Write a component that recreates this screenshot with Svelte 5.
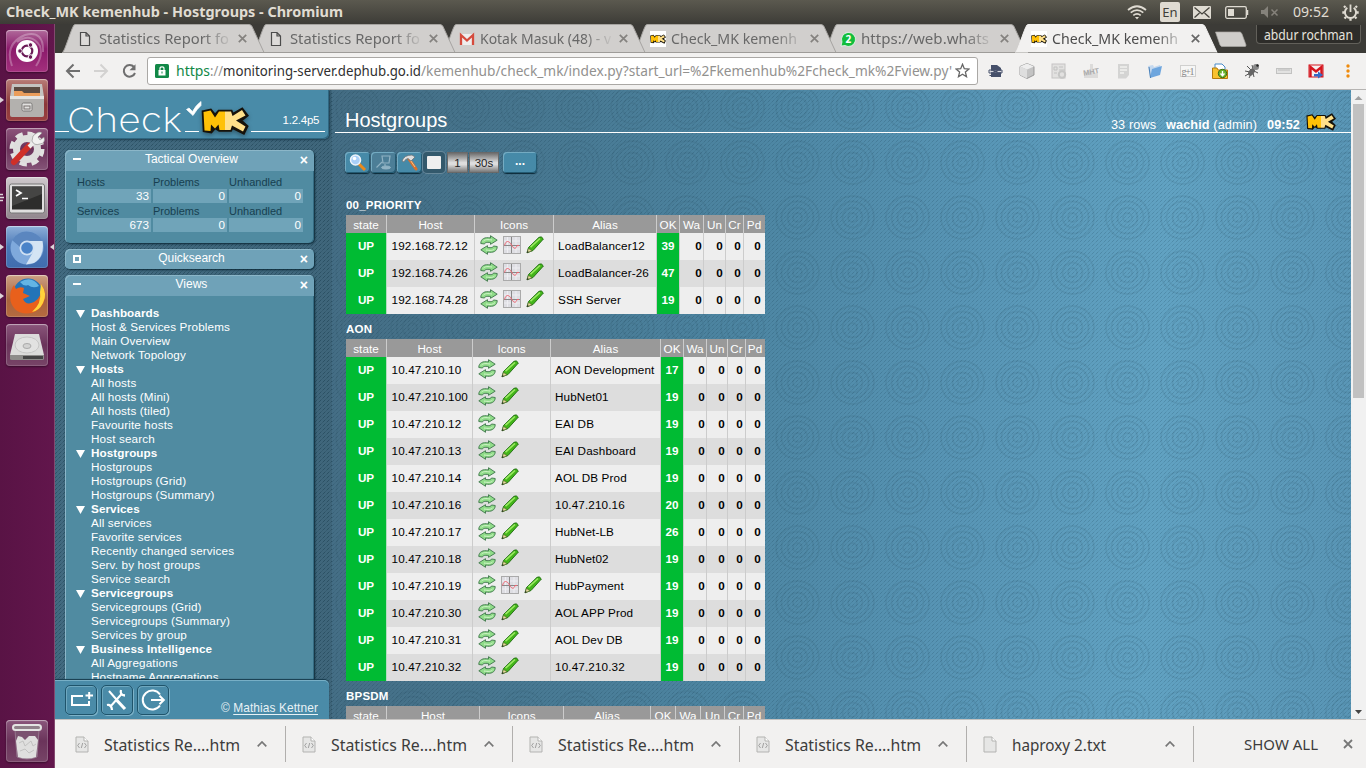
<script>
  const tabs = [
    { icon: 'doc', text: 'Statistics Report fo', w: 130 },
    { icon: 'doc', text: 'Statistics Report fo', w: 130 },
    { icon: 'gmail', text: 'Kotak Masuk (48) - v', w: 131 },
    { icon: 'mk', text: 'Check_MK kemenh', w: 126 },
    { icon: 'wa', text: 'https://web.whats', w: 128 },
    { icon: 'mk', text: 'Check_MK kemenh', w: 126, active: true }
  ];

  const views = [
    ['Dashboards', ['Host & Services Problems', 'Main Overview', 'Network Topology']],
    ['Hosts', ['All hosts', 'All hosts (Mini)', 'All hosts (tiled)', 'Favourite hosts', 'Host search']],
    ['Hostgroups', ['Hostgroups', 'Hostgroups (Grid)', 'Hostgroups (Summary)']],
    ['Services', ['All services', 'Favorite services', 'Recently changed services', 'Serv. by host groups', 'Service search']],
    ['Servicegroups', ['Servicegroups (Grid)', 'Servicegroups (Summary)', 'Services by group']],
    ['Business Intelligence', ['All Aggregations', 'Hostname Aggregations']]
  ];

  const heads = ['state', 'Host', 'Icons', 'Alias', 'OK', 'Wa', 'Un', 'Cr', 'Pd'];
  const groups = [
    {
      name: '00_PRIORITY',
      cols: [41, 88, 79, 103, 23, 24, 22, 18, 21],
      rows: [
        ['192.168.72.12', 'LoadBalancer12', 39, true],
        ['192.168.74.26', 'LoadBalancer-26', 47, true],
        ['192.168.74.28', 'SSH Server', 19, true]
      ]
    },
    {
      name: 'AON',
      cols: [41, 86, 78, 110, 23, 23, 21, 18, 19],
      rows: [
        ['10.47.210.10', 'AON Development', 17],
        ['10.47.210.100', 'HubNet01', 19],
        ['10.47.210.12', 'EAI DB', 19],
        ['10.47.210.13', 'EAI Dashboard', 19],
        ['10.47.210.14', 'AOL DB Prod', 19],
        ['10.47.210.16', '10.47.210.16', 20],
        ['10.47.210.17', 'HubNet-LB', 26],
        ['10.47.210.18', 'HubNet02', 19],
        ['10.47.210.19', 'HubPayment', 19, true],
        ['10.47.210.30', 'AOL APP Prod', 19],
        ['10.47.210.31', 'AOL Dev DB', 19],
        ['10.47.210.32', '10.47.210.32', 19]
      ]
    },
    { name: 'BPSDM', cols: [41, 93, 84, 87, 25, 25, 24, 19, 21], rows: [] }
  ];

  const tactical = [
    ['Hosts', 33],
    ['Services', 673]
  ];
  const downloads = ['Statistics Re….htm', 'Statistics Re….htm', 'Statistics Re….htm', 'Statistics Re….htm'];
</script>

{#snippet fit(text, w, size, color, weight = 400, family = 'Noto Sans')}
  <svg class="fit" width={w} height="22" style:color={color}>
    <text x="0" y="16" textLength={w} lengthAdjust="spacingAndGlyphs" font-size={size} font-weight={weight} font-family="{family}, sans-serif" fill="currentColor">{text}</text>
  </svg>
{/snippet}

{#snippet mk(w, h)}
  <svg class="blk" width={w} height={h} viewBox="0 0 48 28">
    <path d="M2.500 5 9.500 3.500 14 9 18 4.500H30L31.500 8 41 2.500 45.500 8.500 39 13.500 45.500 19.500 42.500 25.500 31 20 29.500 23H18.500L14 20 10 24.500 3.500 23.500Z" fill="#16120a" stroke="#16120a" stroke-width="3.600" stroke-linejoin="miter" />
    <path d="M2.500 5 9.500 3.500 14 10.500 18 4.500H24V23H18.500L17.500 17.500 14 21.500 10 17.500 9.500 24 3.500 23.500Z" fill="#ffc107" />
    <path d="M24 4.500H30L31.500 9 41 3 44.500 8.500 35 13.500 44.500 19.500 42 24.500 31 18.500 29.500 23H24Z" fill="#ffe08a" />
  </svg>
{/snippet}

{#snippet page(code)}
  <svg class="blk" width="14" height="17" viewBox="0 0 14 17">
    <path d="M1 1H9L13 5V16H1Z" fill="#e6e6e5" stroke="#b3b3b1" /><path d="M9 1V5H13" fill="#fff" stroke="#b3b3b1" />
    {#if code}<path d="M4.500 7 2.700 9.500 4.500 12M9.500 7 11.300 9.500 9.500 12M7.700 7 6.300 12" fill="none" stroke="#999" stroke-width=".9" />{/if}
  </svg>
{/snippet}

{#snippet arrows()}
  <svg class="blk" width="18" height="20" viewBox="0 0 18 20">
    <path d="M.8 8.500C.8 3.500 5 2 10.500 3V.7L17.200 5.200 10.500 9.300V7.500C6.500 7 4.800 7.500 4.500 9Z" fill="#8fdc88" stroke="#4a8055" stroke-width="1" />
    <path d="M17.200 11.500C17.200 16.500 13 18 7.500 17V19.300L.8 14.800 7.500 10.700V12.500C11.500 13 13.200 12.500 13.500 11Z" fill="#8fdc88" stroke="#4a8055" stroke-width="1" />
    <path d="M3 6.500C5 4 8 4.500 12 5M15 13.500C13 16 10 15.500 6 15" fill="none" stroke="#d3f5cb" stroke-width="1" />
  </svg>
{/snippet}

{#snippet graph()}
  <svg class="blk" width="18" height="20" viewBox="0 0 18 20">
    <rect x=".5" y="1.500" width="17" height="17" fill="#dedee3" stroke="#aaa" />
    <path d="M1 6H17M1 14H17M4.500 2V18M13 2V18" stroke="#eeeef2" />
    <path d="M1 10.500H17M8.500 2V18" stroke="#888" stroke-width="1" />
    <path d="M1.500 10.500C3 5 6 5.500 8.500 10 11 14.500 13 14 14 10.500H16" fill="none" stroke="#ee6470" stroke-width="1" />
  </svg>
{/snippet}

{#snippet pencil()}
  <svg class="blk" width="18" height="20" viewBox="0 0 18 20">
    <path d="M1 17.800 2.500 12.500 13 2.300Q15.500 .8 17.400 4L7 15.500Z" fill="#43b51a" stroke="#1d6a10" stroke-width=".9" />
    <path d="M4.500 12.200 14 3.500" stroke="#9bea62" stroke-width="1.600" />
    <path d="M1 17.800 2.500 13.500 6 15.700Z" fill="#e9d9a3" stroke="#54682a" stroke-width=".6" /><path d="M.8 18 1.500 16 2.800 17Z" fill="#222" />
  </svg>
{/snippet}

<div class="desktop">
  <header class="topbar">
    <div class="wtitle">{@render fit('Check_MK kemenhub - Hostgroups - Chromium', 337, 15, '#e0dcd2', 700)}</div>
    <svg class="wifi" width="20" height="15" viewBox="0 0 20 15" fill="none" stroke="#dfdbd2" stroke-width="1.700"><path d="M1 5Q10-2.500 19 5M3.700 7.700Q10 2.500 16.300 7.700M6.300 10.300Q10 7.300 13.700 10.300" /><path d="M8 12 10 14.500 12 12Z" fill="#dfdbd2" stroke="none" /></svg>
    <span class="lang">En</span>
    <svg class="mail" width="18" height="13"><rect width="18" height="13" rx="1" fill="#dfdbd2" /><path d="M1.500 1.500 9 8 16.500 1.500M1.500 11.500 6.500 7M16.500 11.500 11.500 7" fill="none" stroke="#45433d" stroke-width="1.300" /></svg>
    <svg class="bat" width="24" height="13"><rect x=".7" y=".7" width="20.600" height="11.600" rx="1.500" fill="none" stroke="#dfdbd2" stroke-width="1.300" /><rect x="3" y="3" width="6" height="7" fill="#dfdbd2" /><path d="M22.500 4V9" stroke="#dfdbd2" stroke-width="1.500" /></svg>
    <svg class="snd" width="18" height="12" fill="none" stroke="#85827b"><path d="M0 4H3L7 0V12L3 8H0Z" fill="#85827b" stroke="none" /><path d="M10.500 3.500 16.500 9.500M16.500 3.500 10.500 9.500" stroke-width="1.500" /></svg>
    <div class="clock">{@render fit('09:52', 36, 15, '#e0dcd2')}</div>
    <svg width="17" height="17" viewBox="0 0 17 17" fill="none" stroke="#dfdbd2"><path d="M5.300 3.800A5.600 5.600 0 1 0 11.700 3.800" stroke-width="2" /><path d="M8.500.5V8" stroke-width="1.800" /><path d="M3.500 3.500 2 2M13.500 3.500 15 2M2.500 8.500H.3M14.500 8.500H16.700M4 13 2.500 14.500M13 13 14.500 14.500M8.500 14.500V16.800" stroke-width="2.300" /></svg>
  </header>

  <aside class="launcher">
    <div class="tile" style:background="linear-gradient(#b06a9b,#8b1a6b 45%,#a3307d)">
      <svg width="42" height="42"><path d="M6 36Q-2 14 19 5 38 0 37 22M11 12Q25 2 34 16 37 26 30 36" fill="none" stroke="#fff" stroke-opacity=".28" stroke-width="2" /><circle cx="21" cy="21" r="11" fill="#fff" /><circle cx="21" cy="21" r="5.300" fill="none" stroke="#6a1b56" stroke-width="2.200" /><g fill="#6a1b56" stroke="#fff" stroke-width="1"><circle cx="14" cy="21" r="2.300" /><circle cx="24.500" cy="15" r="2.300" /><circle cx="24.500" cy="27" r="2.300" /></g></svg>
    </div>
    <div class="tile" style:background="linear-gradient(#b87d77,#8b3739 60%,#9b4040)">
      <svg width="42" height="42"><path d="M6 5H36L38 18H4Z" fill="#c4c3c0" /><path d="M8 8H34V18H8Z" fill="#5a4a41" /><path d="M8 12H16L18 14H34V20H8Z" fill="#eb9d5b" /><path d="M4 17H38V36Q38 38 36 38H6Q4 38 4 36Z" fill="#b3b1ae" /><path d="M4 17H38V20H4Z" fill="#e4e3e1" /><rect x="16" y="24" width="10" height="8" rx="1.500" fill="#e2e1df" stroke="#7b7977" /><rect x="18" y="27" width="6" height="3" fill="none" stroke="#77716e" /></svg>
      <i class="pip"></i>
    </div>
    <div class="tile" style:background="linear-gradient(#8d547c,#6a3159 50%,#855478)">
      <svg width="42" height="42"><circle cx="21" cy="21" r="15" fill="none" stroke="#e2e2e1" stroke-width="5" stroke-dasharray="7.100 4.680" /><circle cx="21" cy="21" r="10.500" fill="none" stroke="#dededd" stroke-width="7" /><path d="M8 34 23 18" stroke="#cf2f28" stroke-width="6" stroke-linecap="round" /><path d="M23 19 29 13" stroke="#ececeb" stroke-width="4" /><path d="M27 8Q33 2 36 5L32 9 34 12 38 9Q40 15 34 16 28 18 26 13Z" fill="#f2f2f1" stroke="#888" stroke-width=".6" /></svg>
    </div>
    <div class="tile" style:background="linear-gradient(#cfc9cd,#91868d)">
      <svg width="42" height="42"><rect x="3.500" y="7" width="35" height="29" rx="2" fill="#e0dfdf" stroke="#777" /><rect x="6" y="9.500" width="30" height="23" fill="#2d2d2c" /><path d="M6 9.500H36V17L6 29Z" fill="#454544" /><path d="M10 13 15 16 10 19M16 21.500H22" fill="none" stroke="#fff" stroke-width="1.700" /></svg>
      <svg class="stack" width="4" height="10"><path d="M0 1.500H3M0 4.500H4M0 7.500H3" stroke="#ddd5da" stroke-width="1.500" /></svg>
    </div>
    <div class="tile" style:background="linear-gradient(#8eb0d9,#4a77b6 50%,#406dae)">
      <svg width="42" height="42"><circle cx="21" cy="22" r="16.500" fill="#7fa9dc" /><path d="M21 15H36.500Q39 30 28 37L20 38.500 27 26Z" fill="#d4e4f4" /><path d="M6 14Q12 5 21 5.500 32 6 36.500 15H21Q15 15 14 21Z" fill="#5b86bf" /><circle cx="21" cy="22" r="7.500" fill="#cfe0f3" /><circle cx="21" cy="22" r="5.800" fill="#4a83c8" /></svg>
      <i class="pip"></i><i class="pip right"></i>
    </div>
    <div class="tile" style:background="linear-gradient(#cda083,#a8633d 60%,#b56b40)">
      <svg width="42" height="42"><circle cx="22" cy="18" r="14.500" fill="#2374b8" /><path d="M14 7Q26 0 33 11 27 14 22 10 18 12 14 7Z" fill="#63b5e4" /><path d="M35 9Q42 18 37 29 31 39 20 38.500 8 38 4.500 26 3 16 8 10L10 14Q14 11 18 13L17 18 24 21 17 24Q20 31 28 27 37 22 35 9Z" fill="#e8601c" /><path d="M35 9Q42 19 37 28 33 36 26 37 36 28 34 17Z" fill="#ffd33b" /></svg>
      <i class="pip"></i>
    </div>
    <div class="tile" style:background="linear-gradient(#8a567b,#6b345b 50%,#774467)">
      <svg width="42" height="42"><path d="M9 10H33L38 31H4Z" fill="#dcdcdb" /><path d="M4 31H38V35Q38 36 36 36H6Q4 36 4 35Z" fill="#8d8c8a" /><path d="M17 32H37V35H17Z" fill="#444" /><ellipse cx="21" cy="21" rx="12" ry="8" fill="#e2e2e1" stroke="#c6c6c5" /><ellipse cx="21" cy="22" rx="4" ry="2.500" fill="#d2d2d1" stroke="#aaa" /></svg>
    </div>
    <div class="tile trash" style:background="linear-gradient(#8a567b,#6b345b 50%,#774467)">
      <svg width="42" height="42"><path d="M9 10H33L31 37Q21 41 11 37Z" fill="#7b5270" stroke="#9c8295" stroke-width=".8" /><path d="M10 21 12 16 16 17 19 20 23 16 29 16 32 20 30 37Q21 40 12 37Z" fill="#dfdfde" /><path d="M13 23 17 21 19 26 25 21 27 26 30 24M14 31 19 29 23 33 28 30" stroke="#c2c2c1" fill="none" /><rect x="7" y="5" width="28" height="5" rx="2.500" fill="#8f8089" stroke="#e4e4e3" stroke-width="2" /></svg>
    </div>
  </aside>

  <main class="browser">
    <nav class="tabs">
      {#each tabs as t, i}
        <div class="tab" class:active={t.active} style:z-index={t.active ? 20 : 10 - i}>
          <svg class="shape" width="204" height="29"><path d="M.5 28.500C3 27 9 5 12 1Q12.500.5 14 .5H187Q189 .5 190 2.500L202 28.500" fill={t.active ? '#f2f1f0' : '#d1cfcd'} stroke={t.active ? '#f2f1f0' : '#a5a3a0'} stroke-width="1" />{#if !t.active}<path d="M0 28.500H204" stroke="#9e9c99" />{/if}</svg>
          <span class="fav">
            {#if t.icon === 'doc'}<svg width="16" height="16"><path d="M2.500 1.500H8L11.500 5V14.500H2.500ZM8 1.500V5H11.500" fill="#dddbd9" stroke="#4c4c4c" stroke-width="1.200" /></svg>
            {:else if t.icon === 'gmail'}<svg width="16" height="16"><rect x="1" y="3" width="14" height="11" fill="#efeded" /><path d="M2 14V4L8 9.500 14 4V14" fill="none" stroke="#d54b3d" stroke-width="2.300" /></svg>
            {:else if t.icon === 'wa'}<svg width="16" height="16"><path d="M1 15 2 11A7 7 0 1 1 5 14.500Z" fill="#12bd3c" stroke="#fff" stroke-width=".7" /><text x="8.300" y="11.500" text-anchor="middle" font-family="Noto Sans" font-size="10" font-weight="700" fill="#fff">2</text></svg>
            {:else}<span class="white">{@render mk(16, 10)}</span>{/if}
          </span>
          <span class="tlabel">{@render fit(t.text, t.w, 15, t.active ? '#4c4c4c' : '#686868')}</span>
          <svg class="x" width="9" height="9"><path d="M.8.8 8.200 8.200M8.200.8.8 8.200" stroke={t.active ? '#686868' : '#84827f'} stroke-width="1.700" /></svg>
        </div>
      {/each}
      <svg class="newtab" width="34" height="17"><path d="M1.500 1H26Q27 1 28 3L32 14Q32 15.500 31 15.500H8Q7 15.500 6 14Z" fill="#cfcdca" stroke="#a9a7a4" stroke-width=".7" /></svg>
      <div class="user">{@render fit('abdur rochman', 89, 13.5, '#e6e3dc')}</div>
    </nav>

    <div class="toolbar">
      <svg class="navs" width="92" height="20" fill="none" stroke-width="2"><g stroke="#6f6f6f"><path d="M26 10H13M19.500 3.500 13 10 19.500 16.500" transform="translate(-1 0)" /></g><g stroke="#d3d2d1"><path d="M39 10H52M45.500 3.500 52 10 45.500 16.500" /></g><path d="M79 6A5.800 5.800 0 1 0 80 12" stroke="#6f6f6f" /><path d="M80.500 3.200V9.200H74.500Z" fill="#6f6f6f" /></svg>
      <div class="url">
        <svg width="14" height="14"><rect width="14" height="14" rx="1.500" fill="#118847" /><rect x="3.500" y="6" width="7" height="5.500" fill="#fff" /><path d="M5 6V4.500Q5 2.800 7 2.800T9 4.500V6" fill="none" stroke="#fff" stroke-width="1.200" /><rect x="6.500" y="7.500" width="1" height="2" fill="#118847" /></svg>
        <div class="urltext">
          {@render fit('https', 34, 15.2, '#118847')}{@render fit('://', 13, 15.2, '#92918f')}{@render fit('monitoring-server.dephub.go.id', 198, 15.2, '#303030')}{@render fit("/kemenhub/check_mk/index.py?start_url=%2Fkemenhub%2Fcheck_mk%2Fview.py'", 531, 15.2, '#92918f')}
        </div>
        <svg width="15" height="15" viewBox="0 0 15 15"><path d="M7.500 1.300 9.300 5.700 14 6 10.400 9.100 11.500 13.700 7.500 11.200 3.500 13.700 4.600 9.100 1 6 5.700 5.700Z" fill="none" stroke="#666" stroke-width="1.300" /></svg>
      </div>
      <div class="exts">
        <svg width="16" height="16"><path d="M4 2H10L14 5V14H4Z" fill="#46506a" /><path d="M3 8.500H15" stroke="#d9dae0" stroke-width="1.400" /><path d="M2 7H7V10H2ZM10 7H15V10H10ZM7 8.500H10M2.500 12.500H13" stroke="#46506a" fill="none" /></svg>
        <svg width="16" height="16"><path d="M8 .5 15 3.500V12L8 15.500 1 12V3.500Z" fill="#c3c3c3" stroke="#888" stroke-width=".8" /><path d="M1 3.500 8 6.500 15 3.500 8 .5Z" fill="#eee" /><path d="M8 6.500V15.500L1 12V3.500Z" fill="#dedede" /></svg>
        <svg width="16" height="16"><rect x="1" y="1" width="13" height="14" fill="#e2e1e0" stroke="#c5c4c3" /><path d="M3 4H6V7H3ZM8 4H12M8 7H14M3 10H6" stroke="#c2c2c1" fill="none" /><circle cx="11" cy="11.500" r="3.200" fill="none" stroke="#c6c6c5" stroke-width="2" /></svg>
        <svg width="16" height="16"><path d="M1 10Q8 6 15 11V15H1ZM7 1H10V9H7Z" fill="#dcdbda" /><text x="0" y="11.500" font-size="7.500" font-weight="700" font-family="Liberation Sans" fill="#aaa" transform="rotate(-10 8 8)" textLength="16">MHT</text></svg>
        <svg width="16" height="16"><path d="M3 1H14V12L11 15.500H3Z" fill="#d4d4d3" /><path d="M5 4H12M5 7H12M5 10H9" stroke="#f1f1f0" stroke-width="1.300" /></svg>
        <svg width="16" height="16"><path d="M1 3 6 2 7 4 13 2 14 5 3 14Z" fill="#c4d8ee" /><path d="M3 15 5 6 15 3 13 12Z" fill="#6ea6de" /><path d="M2 4 3.500 15" stroke="#477fb8" /></svg>
        <svg width="16" height="16"><rect x=".5" y="2.500" width="15" height="11" fill="#f6f6f5" stroke="#d0d0cf" /><text x="1.500" y="11.500" font-size="10" font-family="Liberation Serif" fill="#888" textLength="13">g+1</text></svg>
        <svg width="16" height="16"><path d="M3 1H10L13 4V8H3Z" fill="#fff" stroke="#478ac9" /><path d="M.5 5H5L6 7H15.500V15.500H.5Z" fill="#f9c22e" stroke="#b57b0c" /><circle cx="10.500" cy="10.500" r="4.200" fill="#6bb32c" stroke="#376e18" /><path d="M10.500 8V12M8.500 10.500 10.500 12.800 12.500 10.500" fill="none" stroke="#fff" stroke-width="1.300" /></svg>
        <svg width="16" height="16"><path d="M3 3 7 7M1 8 6 9M1 13 6 10M5 15 7 11M10 14 9 10M14 10 10 8M8 2 9 6" stroke="#555" /><ellipse cx="7.500" cy="9" rx="2.600" ry="4.300" fill="#666" transform="rotate(40 7.500 9)" /><circle cx="12" cy="4" r="3" fill="#888" /><circle cx="13.500" cy="2.500" r="1.200" fill="#222" /></svg>
        <svg width="16" height="16"><rect x=".5" y="5.500" width="15" height="5" fill="#e2e2e1" stroke="#c2c2c1" /><path d="M3 6V8M5 6V8M7 6V8M9 6V8M11 6V8M13 6V8" stroke="#bbb" /></svg>
        <svg width="16" height="16"><rect x="1" y="2" width="14" height="12" fill="#f5f0f0" stroke="#d5141d" /><path d="M2.500 14V4L8 8.500 13.500 4V14" fill="none" stroke="#d5141d" stroke-width="2.400" /><path d="M6 11H10V8.500L15 12 10 15.500V13.500H6Z" fill="#3569c5" /></svg>
        <svg width="16" height="16"><g fill="#ef8b0c"><circle cx="8" cy="3" r="1.700" /><circle cx="8" cy="8" r="1.700" /><circle cx="8" cy="13" r="1.700" /></g></svg>
      </div>
    </div>

    <section class="site">
      <div class="sidebar">
        <div class="logo">
          <svg class="blk" width="274" height="49">
            <path d="M0 41.500H14M130 41.500H144M196 41.500H270" stroke="#fff" />
            <text x="12" y="41.500" textLength="115" lengthAdjust="spacingAndGlyphs" font-size="33.500" font-weight="200" font-family="Inter, Lato, sans-serif" fill="#fff">Check</text>
            <path d="M131.500 19.500 134 18 137.500 21.500Q141 15 146 11.500V15.500Q142 19 138 25.500Z" fill="#fff" stroke="#fff" stroke-width=".7" />
            <text x="227.500" y="34" textLength="37" font-size="11.500" font-family="Liberation Sans, sans-serif" fill="#fff">1.2.4p5</text>
          </svg>
          <span class="biglogo">{@render mk(48, 28)}</span>
        </div>
        <div class="snapins">
          <div class="panel">
            <h2><i class="min"></i>Tactical Overview<b>×</b></h2>
            <div class="tact">
              {#each tactical as [n, v]}
                <span>{n}</span><span>Problems</span><span>Unhandled</span>
                <em>{v}</em><em>0</em><em>0</em>
              {/each}
            </div>
          </div>
          <div class="panel closed"><h2><i class="sq"></i>Quicksearch<b>×</b></h2></div>
          <div class="panel views">
            <h2><i class="min"></i>Views<b>×</b></h2>
            <ul>
              {#each views as [title, items]}
                <li class="vh"><svg width="9" height="8"><path d="M0 0H9L4.500 8Z" fill="#fff" /></svg>{title}</li>
                {#each items as it}<li>{it}</li>{/each}
              {/each}
            </ul>
          </div>
        </div>
        <div class="sfoot">
          <span class="sbtn"><svg width="30" height="28" fill="none" stroke="#fff" stroke-width="2"><path d="M17 10H6V19H23V15M19.500 9.500H27M23.200 6V13" /></svg></span>
          <span class="sbtn"><svg width="30" height="28" fill="none" stroke="#fff"><path d="M7 5 14 13M20 7.500 8 21" stroke-width="2" /><path d="M14.500 14 23 23" stroke-width="3.200" /><path d="M19 4Q17.500 9 23 9.500M5 19Q9.500 18 10 24" stroke-width="2.300" /></svg></span>
          <span class="sbtn"><svg width="30" height="28" fill="none" stroke="#fff" stroke-width="2"><path d="M22 8.500A9.500 9.500 0 1 0 22 19.500" /><path d="M13 14H25.500M21.500 9.800 25.800 14 21.500 18.200" /></svg></span>
          <span class="copy">© <u>Mathias Kettner</u></span>
        </div>
      </div>

      <div class="content">
        <div class="chead">
          <h1>Hostgroups</h1>
          <span class="rows">33 rows</span><span class="who"><b>wachid</b> (admin)</span><b class="time">09:52</b>
          {@render mk(30, 18)}
        </div>
        <div class="buttons">
          <span class="cb"><svg width="20" height="20"><path d="M11 12 17 18" stroke="#e98a1c" stroke-width="3" /><circle cx="7.500" cy="8" r="5" fill="#a9d0f8" stroke="#eef4fa" stroke-width="1.500" /><circle cx="6.500" cy="6.500" r="1.800" fill="#fff" /></svg></span>
          <span class="cb dim"><svg width="20" height="20" fill="none" stroke="#8fb2c3"><path d="M8 4H16L15 11H9ZM8 10 2.500 15.500M11 12V14" stroke-width="1.200" /><ellipse cx="12" cy="15.500" rx="4.500" ry="1.500" fill="#8fb2c3" /></svg></span>
          <span class="cb"><svg width="20" height="20"><path d="M9 7 16 17" stroke="#d9702b" stroke-width="3" stroke-linecap="round" /><path d="M9.500 7 15 15" stroke="#f3c48e" /><path d="M2 9Q4 3 12 3L15 5 11 9 8 6.500Q5 7 4 10Z" fill="#ddd" stroke="#6b7275" stroke-width=".8" /></svg></span>
          <span class="cb dark"><i></i></span>
          <span class="sil one">1</span><span class="sil">30s</span>
          <span class="cb more">...</span>
        </div>
        {#each groups as g}
          <h3>{g.name}</h3>
          <table>
            <colgroup>{#each g.cols as c}<col style:width="{c}px" />{/each}</colgroup>
            <thead><tr>{#each heads as h}<th>{h}</th>{/each}</tr></thead>
            <tbody>
              {#each g.rows as [host, alias, ok, chart]}
                <tr>
                  <td class="up">UP</td>
                  <td>{host}</td>
                  <td><div class="ic">{@render arrows()}{#if chart}{@render graph()}{/if}{@render pencil()}</div></td>
                  <td class="alias">{alias}</td>
                  <td class="ok">{ok}</td>
                  <td class="n">0</td><td class="n">0</td><td class="n">0</td><td class="n">0</td>
                </tr>
              {/each}
            </tbody>
          </table>
        {/each}
      </div>

      <div class="scroll">
        <svg class="blk" width="15" height="14"><path d="M3.500 10 7.500 6 11.500 10Z" fill="#a0a0a0" /></svg>
        <div class="thumb"></div>
        <svg class="blk end" width="15" height="14"><path d="M4 5 7.500 9 11 5Z" fill="#444" /></svg>
      </div>
    </section>

    <footer class="shelf">
      {#each downloads as d}
        <div class="dl">{@render page(true)}<span class="dn">{@render fit(d, 136, 16.5, '#3c3c3c')}</span><svg width="10" height="6"><path d="M.7 5.300 5 1 9.300 5.300" fill="none" stroke="#777" stroke-width="1.700" /></svg></div>
      {/each}
      <div class="dl">{@render page(false)}<span class="dn">{@render fit('haproxy 2.txt', 94, 16.5, '#3c3c3c')}</span><svg width="10" height="6"><path d="M.7 5.300 5 1 9.300 5.300" fill="none" stroke="#777" stroke-width="1.700" /></svg></div>
      <div class="all">{@render fit('SHOW ALL', 74, 14.6, '#3c3c3c')}</div>
      <svg width="10" height="10"><path d="M1 1 9 9M9 1 1 9" stroke="#777" stroke-width="1.800" /></svg>
    </footer>
  </main>
</div>

<style>
  :global(body) { margin: 0; overflow: hidden; }
  * { box-sizing: border-box; }
  svg { display: block; flex: none; }
  .fit { overflow: visible; }
  .desktop { width: 1366px; height: 768px; display: grid; grid-template: 24px 744px / 55px 1311px; font-family: "Liberation Sans", Arial, sans-serif; overflow: hidden; }
  .topbar { grid-column: 1 / 3; background: linear-gradient(#5b594f, #3d3c37); display: flex; align-items: center; padding: 0 7px 0 6px; }
  .wtitle { margin-right: auto; }
  .wifi { margin-right: 13px; }
  .lang { width: 20px; height: 20px; background: #dfdbd2; border-radius: 2px; color: #403e39; font: 13px/21px "Noto Sans", sans-serif; text-align: center; margin-right: 13px; }
  .mail { margin-right: 14px; }
  .bat { margin-right: 12px; }
  .snd { margin-right: 14px; }
  .clock { margin-right: 13px; }
  .launcher { background: linear-gradient(90deg, #591345, #62164c); border-right: 1px solid #83496f; padding: 6px 0 6px 6px; display: flex; flex-direction: column; gap: 7px; }
  .tile { width: 42px; height: 42px; border-radius: 4px; position: relative; box-shadow: inset 0 1px 1px #fff6, inset 0 0 0 1px #ffffff26, 0 1px 2px #0006; flex: none; }
  .trash { margin-top: auto; }
  .pip { position: absolute; left: -6px; top: 18px; border: 3px solid transparent; border-left: 4px solid #ddd5da; border-right: 0; }
  .pip.right { left: 44px; border-left: 0; border-right: 4px solid #ddd5da; }
  .stack { position: absolute; left: -6px; top: 16px; }
  .browser { display: grid; grid-template-rows: 29px 37px 629px 49px; background: #f2f1f0; }
  .tabs { background: #3c3b37; display: flex; padding-left: 7px; position: relative; }
  .tab { width: 190.600px; height: 29px; position: relative; display: flex; align-items: center; padding-left: 16px; flex: none; }
  .shape { position: absolute; left: 0; top: 0; }
  .fav { width: 16px; height: 16px; position: relative; margin-right: 5px; }
  .white { display: flex; background: #fff; width: 16px; height: 16px; align-items: center; }
  .tlabel { width: 137px; position: relative; mask-image: linear-gradient(90deg, #000 76%, transparent 98%); }
  .x { position: relative; margin-left: 1px; left: 1px; }
  .newtab { margin: 7px 8px 0 8px; }
  .user { height: 19px; width: 105px; border: 1px solid #62605a; border-top: 0; background: #2d2c29; border-radius: 0 0 4px 4px; padding: 0 7px; margin-top: 1px; overflow: hidden; }
  .user .fit { margin-top: -1px; }
  .toolbar { border-bottom: 1px solid #b6b4b2; display: flex; align-items: center; }
  .navs { margin-bottom: 1px; }
  .url { width: 831px; height: 28px; border: 1px solid #aaa8a5; border-radius: 3px; background: #fff; display: flex; align-items: center; padding: 0 7px; margin-top: -1px; }
  .urltext { display: flex; width: 780px; margin: 1px 0 0 7px; }
  .exts { display: flex; gap: 16.100px; padding-left: 9px; margin-top: -1px; }
  .site { display: grid; grid-template-columns: 277px 1019px 15px; height: 629px; overflow: hidden; background: #3d657b; }
  .sidebar { height: 629px; display: flex; flex-direction: column; background: url("data:image/svg+xml,%3Csvg xmlns='http://www.w3.org/2000/svg' width='4' height='4'%3E%3Cpath d='M0 3h1v1H0zM1 2h1v1H1z' fill='%23002030' fill-opacity='.3'/%3E%3Cpath d='M2 1h1v1H2zM3 0h1v1H3z' fill='%23002030' fill-opacity='.15'/%3E%3C/svg%3E"), linear-gradient(90deg, #426a80, #3f667b); }
  .logo { height: 49px; width: 274px; background: #498ba8; border-radius: 0 0 5px 0; box-shadow: 1px 1px 2px #0f2c3caa, inset -1px -1px 0 #2f6680; position: relative; flex: none; }
  .biglogo { position: absolute; left: 146px; top: 17px; filter: drop-shadow(0 2px 2px #0005); }
  .snapins { flex: 1; min-height: 0; overflow: hidden; padding: 11px 0 0 10px; }
  .panel { width: 249px; height: 93px; border-radius: 5px; background: #508ba1; margin-bottom: 6px; box-shadow: inset 1px 1px 0 #8bb6c8, inset -1px 0 0 #346b82, 1px 1px 2px #0b2836; overflow: hidden; }
  .closed { height: 20px; }
  .views { height: 420px; }
  h2 { margin: 0; height: 21px; background: #6fa2b8; border-radius: 5px 5px 0 0; box-shadow: inset 1px 1px 0 #8bb6c8; display: flex; justify-content: space-between; padding: 0 6px 0 8px; font-size: 12px; line-height: 19px; font-weight: 400; color: #fff; text-indent: 2px; letter-spacing: -.02px; }
  h2 b { font-size: 14px; line-height: 20px; text-indent: 0; }
  .min { width: 8px; height: 2px; background: #fff; margin-top: 8px; }
  .sq { width: 8px; height: 8px; border: 2px solid #fff; margin-top: 6px; }
  .tact { display: grid; grid-template-columns: repeat(3, 74px); column-gap: 2px; grid-auto-rows: 15px 14px; padding: 3px 0 0 12px; font-size: 11px; line-height: 16px; color: #173f50; }
  .tact em { font-style: normal; font-size: 11.700px; line-height: 14px; color: #fff; text-align: right; background: #70a4b9; padding-right: 2px; }
  ul { list-style: none; margin: 0; padding: 10px 0 0 26px; font-size: 11.700px; line-height: 14px; color: #fff; letter-spacing: .14px; }
  .vh { font-weight: 700; display: flex; align-items: center; margin-left: -15px; gap: 6px; letter-spacing: .08px; }
  .vh svg { margin-top: 2px; }
  .sfoot { height: 39px; width: 274px; background: #4a8ba8; border-radius: 0 5px 0 0; box-shadow: 0 -1px 1px #163a4c, inset 0 1px 0 #77afc6; display: flex; padding: 5px 11px 0 10px; gap: 4px; color: #e8f2f6; font-size: 11.900px; flex: none; position: relative; }
  .sbtn { width: 32px; height: 30px; border: 1px solid #1f546b; border-radius: 5px; box-shadow: 1px 1px 0 #7eb3c9, inset 1px 1px 0 #6fa8bf; }
  .copy { margin: 16px 0 0 auto; white-space: nowrap; letter-spacing: .1px; }
  .copy u { text-underline-offset: 2px; }
  .content {
    height: 629px; overflow: hidden; padding-left: 14px; color: #fff;
    background:
      url("data:image/svg+xml,%3Csvg xmlns='http://www.w3.org/2000/svg' width='4' height='4'%3E%3Cpath d='M0 3h1v1H0zM1 2h1v1H1z' fill='%23002030' fill-opacity='.16'/%3E%3Cpath d='M2 1h1v1H2zM3 0h1v1H3z' fill='%23002030' fill-opacity='.08'/%3E%3C/svg%3E"),
      url("data:image/svg+xml,%3Csvg xmlns='http://www.w3.org/2000/svg' width='55' height='55'%3E%3Cg fill='none' stroke='%23204858' stroke-opacity='.11' stroke-width='1.800'%3E%3Ccircle cx='27.500' cy='27.500' r='4.500'/%3E%3Ccircle cx='27.500' cy='27.500' r='10'/%3E%3Ccircle cx='27.500' cy='27.500' r='16'/%3E%3Ccircle cx='27.500' cy='27.500' r='21.500'/%3E%3C/g%3E%3C/svg%3E") 53px 45px,
      linear-gradient(93deg, #446d84 0, #47768f 18%, #4d86a3 41%, #5794b4 60%, #61a2c2 80%, #5995b5 100%);
  }
  .chead { height: 43px; margin-left: -11px; border-bottom: 1px solid #fff; display: flex; align-items: flex-end; padding: 0 15px 1px 10px; font-size: 12.700px; line-height: 14px; letter-spacing: .1px; }
  h1 { margin: 0 auto 1px 0; font-size: 20px; line-height: 23px; font-weight: 400; letter-spacing: 0; position: relative; top: 2px; }
  .rows, .who { margin-right: 10px; }
  .time { margin-right: 6px; }
  .rows, .who, .time { position: relative; top: 1px; }
  .buttons { display: flex; height: 67px; padding-top: 19px; margin-left: -1px; align-items: flex-start; }
  .cb { width: 25px; height: 21px; border-radius: 4px; background: #468aa8; box-shadow: inset 1px 1px 0 #74abc2, inset -1px -1px 0 #245a72, 0 1px 1px #0b2836; margin-right: 1px; padding-left: 3px; }
  .dim { background: #4c7e97; }
  .dark { width: 22px; background: #33596c; padding: 4px; box-shadow: 0 0 0 1px #67889a; margin-right: 2px; }
  .dark i { display: block; width: 14px; height: 13px; background: #efefef; border-radius: 1px; }
  .sil { width: 30px; height: 21px; border: 1px solid #696969; background: linear-gradient(#6d6d6d, #ddd 50%, #dedede 60%, #777); color: #222; font-size: 11.500px; line-height: 20px; text-align: center; }
  .one { width: 21px; margin-right: 1px; }
  .more { width: 34px; margin-left: 4px; text-align: center; padding: 0; font-weight: 700; font-size: 12px; line-height: 19px; }
  h3 { margin: 0; height: 25px; padding-top: 8px; font-size: 11.500px; line-height: 14px; letter-spacing: .2px; }
  .buttons + h3 { margin-top: -10px; }
  table { width: 419px; table-layout: fixed; border-collapse: separate; border-spacing: 0; font-size: 11.700px; color: #000; }
  th { height: 18px; background: #999; color: #fff; font-weight: 400; padding: 0; border-right: 1px solid #ccc; line-height: 17px; letter-spacing: .05px; }
  td { height: 27px; padding: 0 0 1px 5px; border-right: 1px solid #ccc; background: #eee; line-height: 14px; white-space: nowrap; letter-spacing: .13px; }
  td:nth-child(2) { padding-left: 4.500px; }
  th:last-child, td:last-child { border-right-color: transparent; background-clip: border-box; }
  tr:nth-child(even) td { background-color: #ddd; }
  tbody .up, tbody tr:nth-child(even) .up, tbody .ok, tbody tr:nth-child(even) .ok { background: #00bb33; color: #fff; font-weight: 700; text-align: center; padding-left: 0; letter-spacing: 0; }
  tbody .up { border-right-color: #b5dcc0; }
  .alias { padding-left: 4px; }
  .n { font-weight: 700; text-align: right; padding: 0 1px 1px 0; }
  .n:nth-last-child(-n+3) { padding-right: 2px; }
  .n:last-child { padding-right: 3px; }
  .ic { display: flex; gap: 5px; margin-top: -2px; }
  .scroll { background: #f1f1f1; display: flex; flex-direction: column; align-items: center; }
  .thumb { width: 11px; height: 294px; background: #c1c1c1; }
  .end { margin-top: auto; }
  .shelf { border-top: 1px solid #c5c3c1; display: flex; align-items: center; padding-left: 4px; }
  .dl { width: 227px; height: 36px; border-right: 1px solid #b1afad; display: flex; align-items: center; padding: 0 18px 0 16px; }
  .dn { margin: 3px auto 0 15px; }
  .all { margin: 2px 25px 0 50px; }
</style>
